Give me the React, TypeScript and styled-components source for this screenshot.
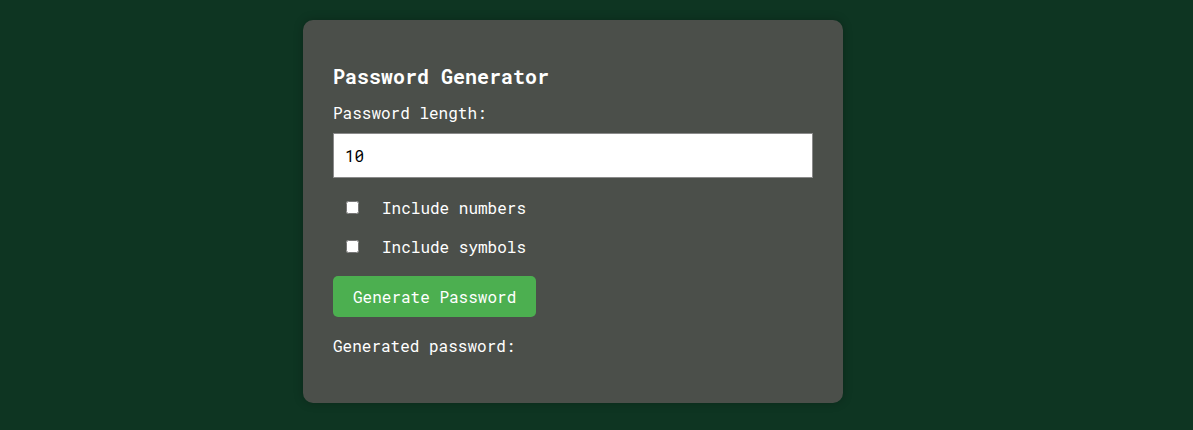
import React from "react";
import styled, { createGlobalStyle } from "styled-components";

const Global = createGlobalStyle`
  html, body { margin: 0; padding: 0; }
  body {
    background: #0e3522;
    font-family: "Roboto Mono", "DejaVu Sans Mono", "Liberation Mono", monospace;
    color: #ffffff;
    height: 430px;
    overflow: hidden;
  }
`;

const Page = styled.div`
  padding: 20px 0 0 303px;
`;

const Card = styled.div`
  width: 540px;
  box-sizing: border-box;
  background: #4b4f4a;
  border-radius: 10px;
  padding: 44px 30px 48px;
  box-shadow: 0 0 10px rgba(0, 0, 0, 0.25);
  display: flex;
  flex-direction: column;
  align-items: flex-start;
`;

const Title = styled.h2`
  margin: 0;
  font-size: 20px;
  line-height: 24px;
  font-weight: 700;
`;

const Label = styled.label`
  margin-top: 15px;
  font-size: 16px;
  line-height: 19px;
`;

const Input = styled.input`
  margin-top: 11px;
  width: 480px;
  height: 45px;
  box-sizing: border-box;
  border: 1px solid #8a8a8a;
  background: #ffffff;
  color: #000000;
  font-family: inherit;
  font-size: 16px;
  padding: 0 11px;
  outline: none;
`;

const CheckRow = styled.label<{ $first?: boolean }>`
  display: flex;
  align-items: center;
  margin-top: 20px;
  font-size: 16px;
  line-height: 19px;
`;

const Box = styled.input`
  width: 13px;
  height: 13px;
  margin: 0 23px 0 13px;
`;

const Button = styled.button`
  margin-top: 20px;
  height: 41px;
  padding: 0 20px;
  border: none;
  border-radius: 5px;
  background: #4caf50;
  color: #ffffff;
  font-family: inherit;
  font-size: 16px;
  cursor: pointer;
`;

const Output = styled.p`
  margin: 19px 0 0;
  font-size: 16px;
  line-height: 19px;
`;

export default function App() {
  return (
    <>
      <Global />
      <Page>
        <Card>
          <Title>Password Generator</Title>
          <Label htmlFor="len">Password length:</Label>
          <Input id="len" type="text" defaultValue="10" />
          <CheckRow $first>
            <Box type="checkbox" />
            Include numbers
          </CheckRow>
          <CheckRow>
            <Box type="checkbox" />
            Include symbols
          </CheckRow>
          <Button>Generate Password</Button>
          <Output>Generated password:</Output>
        </Card>
      </Page>
    </>
  );
}
